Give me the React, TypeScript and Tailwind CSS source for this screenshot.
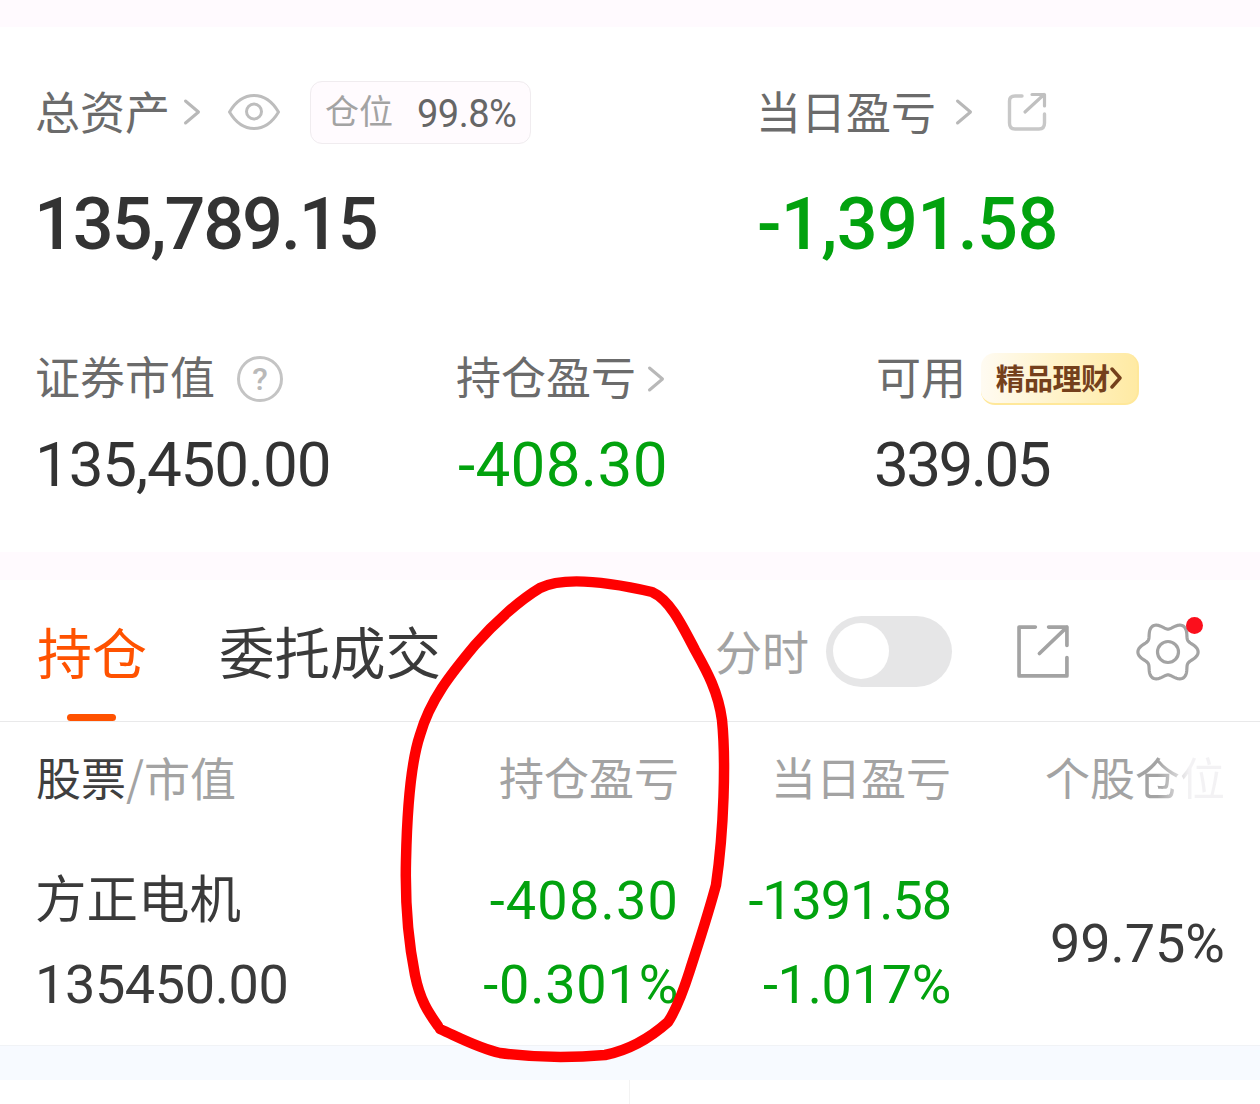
const CJK = "font-['Noto_Sans_CJK_SC',sans-serif]";
const NUM = "font-['Roboto','Noto_Sans_CJK_SC',sans-serif]";

function Chevron({ className = "" }: { className?: string }) {
  return (
    <svg width="18" height="28" viewBox="0 0 18 28" fill="none" className={className}>
      <path d="M2.5 3 L15.5 14 L2.5 25" stroke="#b8b8b8" strokeWidth="3" strokeLinecap="round" strokeLinejoin="round" />
    </svg>
  );
}

function Eye() {
  return (
    <svg width="52" height="36" viewBox="0 0 52 36" fill="none">
      <path d="M1.5 18 C8 7 16 1.5 26 1.5 C36 1.5 44 7 50.5 18 C44 29 36 34.5 26 34.5 C16 34.5 8 29 1.5 18 Z" stroke="#bdbdbd" strokeWidth="3" strokeLinejoin="round" />
      <circle cx="26" cy="17.5" r="7.5" stroke="#bdbdbd" strokeWidth="3" />
    </svg>
  );
}

function ShareRound() {
  return (
    <svg width="40" height="40" viewBox="0 0 40 40" fill="none">
      <path d="M15 4 H8 C4.5 4 2.5 6 2.5 9 V31 C2.5 35 4.5 37 8 37 H32 C35.5 37 37.5 35 37.5 31 V22" stroke="#c8c8c8" strokeWidth="3.4" strokeLinecap="round" strokeLinejoin="round" />
      <path d="M18 20 L37 2.5 M25 2.5 H37.5 V14" stroke="#c0c0c0" strokeWidth="3.2" strokeLinecap="round" strokeLinejoin="round" />
    </svg>
  );
}

function Share() {
  return (
    <svg width="55" height="55" viewBox="0 0 54 54" fill="none">
      <path d="M19 3 H3 V51 H50 V33" stroke="#a3a3a3" strokeWidth="3.6" strokeLinecap="round" strokeLinejoin="round" />
      <path d="M23 29 L50 3 M32 3 H50 V21" stroke="#a3a3a3" strokeWidth="3.6" strokeLinecap="round" strokeLinejoin="round" />
    </svg>
  );
}

const gearPath = (() => {
  const pts: string[] = [];
  for (let i = 0; i < 180; i++) {
    const t = (i / 180) * Math.PI * 2;
    const r = 26.5 + 3.6 * Math.cos(6 * t);
    pts.push(`${(33 + r * Math.cos(t)).toFixed(2)} ${(33 + r * Math.sin(t)).toFixed(2)}`);
  }
  return `M${pts.join(" L")} Z`;
})();

function Gear() {
  return (
    <div className="relative w-[66px] h-[66px] mt-[2px]">
      <svg width="66" height="66" viewBox="0 0 66 66" fill="none">
        <path d={gearPath} stroke="#a3a3a3" strokeWidth="3.2" strokeLinejoin="round" />
        <circle cx="33" cy="33" r="10.5" stroke="#a3a3a3" strokeWidth="3.2" />
      </svg>
      <span className="absolute top-[-2px] right-[-2px] w-[17px] h-[17px] rounded-full bg-[#fb0f1c]" />
    </div>
  );
}

function Help() {
  return (
    <div className={`flex items-center justify-center w-[46px] h-[46px] rounded-full border-[3px] border-[#c4c4c4] text-[#b9b9b9] text-[32px] leading-none font-medium ${NUM}`}>?</div>
  );
}

function Stat({ label, value, tone, track, extra, w, nudge }: { label: string; value: string; tone: string; track: string; extra: React.ReactNode; w: string; nudge: string }) {
  return (
    <div className={w}>
      <div className="flex items-center h-[50px]">
        <span className={`text-[45px] leading-[50px] text-[#6b6b6b] ${CJK}`}>{label}</span>
        {extra}
      </div>
      <div className={`mt-[29px] text-[62px] leading-[70px] ${nudge} ${track} ${tone} ${NUM}`}>{value}</div>
    </div>
  );
}

export default function App() {
  return (
    <div className={`relative w-[1260px] h-[1104px] overflow-hidden bg-white ${CJK}`}>
      <div className="h-[27px] bg-[#fffafe]" />

      <section className="h-[525px] pl-[35px]">
        <div className="flex pt-[53px] h-[245px]">
          <div className="w-[721px]">
            <div className="flex items-center h-[64px]">
              <span className="text-[45px] leading-[60px] mb-[3px] text-[#6b6b6b]">总资产</span>
              <Chevron className="ml-[13px]" />
              <span className="ml-[27px]"><Eye /></span>
              <div className="ml-[30px] flex items-center w-[221px] h-[63px] rounded-[12px] border border-[#f0ecef] bg-[#fffbfe] pl-[14px]">
                <span className="text-[34px] leading-[46px] mb-[4px] text-[#a3a3a3]">仓位</span>
                <span className={`ml-[24px] text-[38px] leading-[46px] mt-[3px] tracking-[-0.5px] text-[#666666] ${NUM}`}>99.8%</span>
              </div>
            </div>
            <div className={`mt-[39px] -ml-[1px] text-[72px] leading-[84px] tracking-[-2.1px] text-[#333333] font-medium ${NUM}`}>135,789.15</div>
          </div>
          <div>
            <div className="flex items-center h-[64px]">
              <span className="text-[45px] leading-[60px] mb-[3px] text-[#6b6b6b]">当日盈亏</span>
              <Chevron className="ml-[19px]" />
              <span className="ml-[34px]"><ShareRound /></span>
            </div>
            <div className={`mt-[39px] ml-[1px] text-[72px] leading-[84px] tracking-[-0.6px] text-[#02a20e] font-medium ${NUM}`}>-1,391.58</div>
          </div>
        </div>

        <div className="flex mt-[79px]">
          <Stat
            w="w-[421px]"
            label="证券市值"
            value="135,450.00"
            tone="text-[#333333]"
            track="tracking-[-1.2px]"
            nudge="ml-0"
            extra={<span className="ml-[22px] mt-[5px]"><Help /></span>}
          />
          <Stat
            w="w-[420px]"
            label="持仓盈亏"
            value="-408.30"
            tone="text-[#02a20e]"
            track="tracking-[0.3px]"
            nudge="ml-[2px]"
            extra={<Chevron className="ml-[11px] mt-[5px]" />}
          />
          <Stat
            w="w-[300px]"
            label="可用"
            value="339.05"
            tone="text-[#333333]"
            track="tracking-[-2.6px]"
            nudge="-ml-[2px]"
            extra={
              <div className="ml-[15px] mt-[5px] flex items-center justify-center gap-[1px] w-[158px] h-[52px] rounded-[14px] bg-gradient-to-r from-[#fffbf2] via-[#fff3c8] to-[#ffeaa3] border-b-2 border-r-2 border-b-[#ffe89a] border-r-[#ffe89a]">
                <span className="text-[29px] leading-none font-bold text-[#74401c] tracking-[-0.6px]">精品理财</span>
                <svg width="12" height="22" viewBox="0 0 12 22" fill="none">
                  <path d="M2 2 L10 11 L2 20" stroke="#74401c" strokeWidth="3.4" strokeLinecap="round" strokeLinejoin="round" />
                </svg>
              </div>
            }
          />
        </div>
      </section>

      <div className="h-[28px] bg-[#fffafe]" />

      <section className="h-[142px] pl-[37px] pr-[58px] flex border-b border-[#e9e9ea]">
        <div className="relative w-[182px] flex pt-[36px]">
          <span className="text-[55px] leading-[68px] text-[#ff5200]">持仓</span>
          <span className="absolute left-[30px] top-[134px] w-[49px] h-[7px] rounded-full bg-[#ff5200]" />
        </div>
        <div className="pt-[36px] w-[496px]">
          <span className="text-[55.5px] leading-[68px] text-[#3a3a3a]">委托成交</span>
        </div>
        <div className="flex items-center h-[142px]">
          <span className="text-[47px] text-[#a3a3a3] mb-[2px]">分时</span>
          <div className="ml-[17px] w-[126px] h-[71px] rounded-full bg-[#e6e6e7] pl-[7px] flex items-center">
            <span className="w-[56px] h-[56px] rounded-full bg-white" />
          </div>
          <span className="ml-[64px]"><Share /></span>
          <span className="ml-[64px]"><Gear /></span>
        </div>
      </section>

      <section className="relative h-[323px]">
        <div className="flex h-[115px] items-center text-[45px] leading-[56px] text-[#a3a3a3] pb-[6px]">
          <div className="w-[372px] pl-[36px]">
            <span className="text-[#3f3f3f]">股票</span><span className="text-[46px]">/市值</span>
          </div>
          <div className="w-[307px] text-right">持仓盈亏</div>
          <div className="w-[272px] text-right">当日盈亏</div>
          <div className="ml-[94px] whitespace-nowrap">
            <span>个股</span>
            <span className="bg-gradient-to-r from-[#a3a3a3] from-[25%] to-[#f3f2f4] to-[60%] bg-clip-text text-transparent">仓位</span>
          </div>
        </div>
        <div className="flex h-[208px] pt-[22px]">
          <div className="w-[372px] pl-[35px]">
            <div className="text-[51.5px] leading-[74px] mb-[10px] text-[#3a3a3a]">方正电机</div>
            <div className={`text-[54px] leading-[84px] text-[#3a3a3a] tracking-[-0.4px] ${NUM}`}>135450.00</div>
          </div>
          <div className={`w-[307px] text-right text-[54px] leading-[84px] text-[#02a20e] ${NUM}`}>
            <div className="tracking-[1.2px]">-408.30</div>
            <div className="tracking-[0.8px]">-0.301%</div>
          </div>
          <div className={`w-[272px] text-right text-[54px] leading-[84px] text-[#02a20e] ${NUM}`}>
            <div className="tracking-[-1.1px]">-1391.58</div>
            <div className="tracking-[-0.3px]">-1.017%</div>
          </div>
          <div className={`w-[274px] pl-[99px] text-left text-[54px] leading-[170px] text-[#3a3a3a] tracking-[-0.1px] ${NUM}`}>99.75%</div>
        </div>
      </section>

      <div className="h-[35px] border-t border-[#f1f3f6] bg-[#f7faff]" />
      <div className="flex h-[25px]">
        <div className="w-[630px] border-r border-[#f3f3f3]" />
      </div>

      <svg className="absolute inset-0 pointer-events-none" width="1260" height="1104" viewBox="0 0 1260 1104" fill="none">
        <path
          d="M438 1026 C428 1012 420 1000 415 975 C408 940 405 900 406 860 C407 815 410 765 420 735 C430 700 450 675 475 645 C495 622 520 600 540 588 C560 578 600 580 652 592 C670 600 682 625 695 650 C705 668 718 690 722 720 C726 760 724 830 716 885 C708 915 698 945 690 970 C682 995 676 1010 668 1022 C650 1038 630 1050 605 1055 C570 1058 530 1057 500 1053 C478 1048 460 1038 440 1029"
          stroke="#ff0000" strokeWidth="10.5" strokeLinecap="round" strokeLinejoin="round"
        />
      </svg>
    </div>
  );
}
